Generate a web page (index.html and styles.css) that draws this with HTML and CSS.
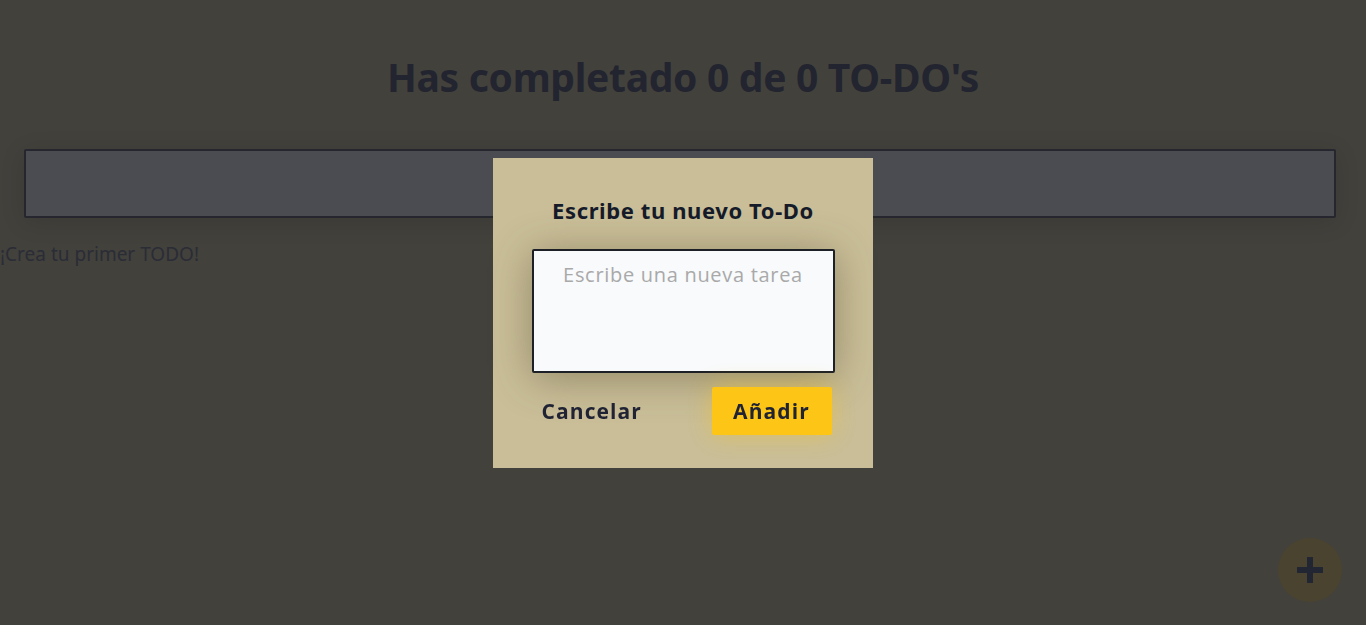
FILE: index.html
```html
<!DOCTYPE html>
<html lang="es">
<head>
<meta charset="utf-8">
<title>TODO</title>
<link rel="stylesheet" href="styles.css">
</head>
<body>
<main class="app">
  <h1 class="counter">Has completado 0 de 0 TO-DO's</h1>
  <div class="search-wrap"><input class="search" type="text" aria-label="Buscar"></div>
  <p class="empty">¡Crea tu primer TODO!</p>
  <p class="stray">:</p>
</main>
<button class="fab" aria-label="Crear TODO">
  <svg viewBox="0 0 26 26" width="26" height="26"><path d="M10 0h6v10h10v6H16v10h-6V16H0v-6h10z" fill="#222632"/></svg>
</button>
<div class="overlay"></div>
<form class="modal">
  <label class="modal-title" for="t">Escribe tu nuevo To-Do</label>
  <textarea id="t" class="modal-input" placeholder="Escribe una nueva tarea"></textarea>
  <div class="modal-actions">
    <button type="button" class="btn btn-cancel">Cancelar</button>
    <button type="button" class="btn btn-add">Añadir</button>
  </div>
</form>
</body>
</html>
```
FILE: styles.css
```css
html, body {
  margin: 0;
  height: 100%;
}
body {
  background: #42413c;
  font-family: "Open Sans", "Noto Sans", sans-serif;
  color: #262833;
  overflow: hidden;
}
.app {
  display: flex;
  flex-direction: column;
  padding-top: 48px;
}
.counter {
  margin: 0;
  text-align: center;
  font-family: "Noto Sans", sans-serif;
  font-size: 39px;
  font-weight: 700;
  line-height: 58px;
  color: #22242f;
  letter-spacing: -0.3px;
}
.search-wrap {
  padding: 43px 30px 0 24px;
}
.search {
  display: block;
  width: 100%;
  box-sizing: border-box;
  height: 69px;
  background: #4b4c52;
  border: 2px solid #25262e;
  border-radius: 2px;
  outline: none;
  box-shadow: 0 4px 24px rgba(0,0,0,0.12);
}
.empty {
  margin: 24px 0 0 0;
  font-size: 19px;
  line-height: 24px;
  font-family: "Noto Sans", sans-serif;
  color: #2a2c36;
}
.stray {
  margin: 70px 0 0 -5px;
  font-size: 16px;
  color: #2e3038;
}
.fab {
  position: fixed;
  right: 24px;
  bottom: 23px;
  width: 64px;
  height: 64px;
  border-radius: 50%;
  border: none;
  background: #4a4330;
  display: flex;
  align-items: center;
  justify-content: center;
  padding: 0;
}
.overlay {
  position: fixed;
  inset: 0;
  background: rgba(0,0,0,0);
}
.modal {
  position: fixed;
  left: 493px;
  top: 158px;
  width: 380px;
  height: 310px;
  box-sizing: border-box;
  background: #c9be98;
  display: flex;
  flex-direction: column;
  align-items: center;
  padding-top: 37px;
}
.modal-title {
  font-family: "Noto Sans", sans-serif;
  font-size: 22px;
  font-weight: 700;
  line-height: 30px;
  color: #161b2a;
  letter-spacing: 0.6px;
}
.modal-input {
  margin-top: 24px;
  width: 303px;
  height: 124px;
  box-sizing: border-box;
  border: 2px solid #1e2028;
  border-radius: 2px;
  background: #f8fafc;
  resize: none;
  font-family: "Open Sans", sans-serif;
  font-size: 20px;
  letter-spacing: 0.7px;
  text-align: center;
  padding: 10px 8px;
  box-shadow: 0 5px 40px rgba(80,70,40,0.45);
  outline: none;
}
.modal-input::placeholder {
  color: #a9a9a9;
}
.modal-actions {
  margin-top: 14px;
  width: 303px;
  display: flex;
  justify-content: space-between;
  align-items: center;
  padding: 0 3px 0 0;
  box-sizing: border-box;
}
.btn {
  font-family: "Open Sans", sans-serif;
  font-size: 21px;
  font-weight: 700;
  letter-spacing: 1.1px;
  border: none;
  color: #1f2333;
  height: 48px;
  cursor: pointer;
}
.btn-cancel {
  background: transparent;
  padding: 0 10px;
}
.btn-add {
  width: 120px;
  padding: 0;
  background: #fdc516;
  border-radius: 2px;
  box-shadow: 0 0 24px rgba(253,197,22,0.45);
}
```
